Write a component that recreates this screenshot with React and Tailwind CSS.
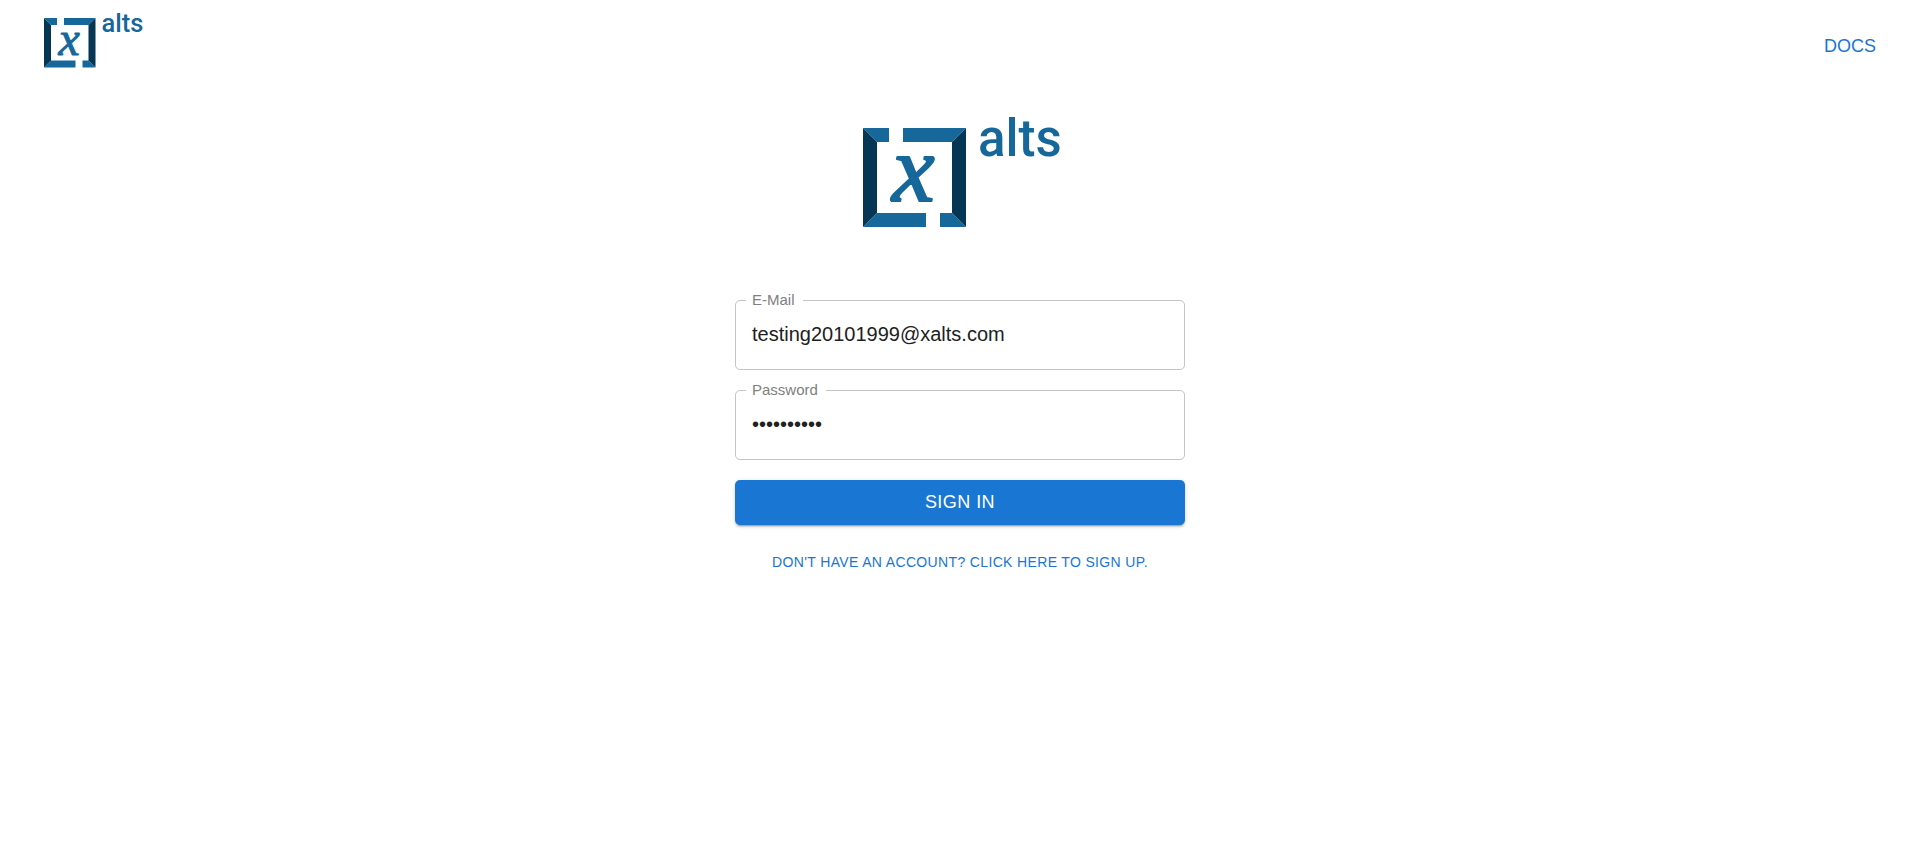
import { useState } from "react";

function Logo({ className }) {
  return (
    <svg viewBox="0 0 194 112" className={className} role="img" aria-label="xalts">
      <g fill="#16679a">
        <path d="M0 12H26V26H14Z" />
        <path d="M40 12H103L89 26H40Z" />
        <path d="M14 97H63V111H0Z" />
        <path d="M77 97H89L103 111H77Z" />
      </g>
      <g fill="#053755">
        <path d="M0 12L14 26V97L0 111Z" />
        <path d="M103 12L89 26V97L103 111Z" />
      </g>
      <text
        x="29"
        y="85"
        fill="#16679a"
        stroke="#16679a"
        strokeWidth="2"
        strokeLinejoin="round"
        fontSize="96"
        fontStyle="italic"
        fontFamily="'Liberation Serif', serif"
      >
        x
      </text>
      <text x="115" y="40" fill="#16679a" fontSize="51" fontWeight="500" fontFamily="Roboto, sans-serif">
        alts
      </text>
    </svg>
  );
}

function Field({ id, label, type, value, onChange, autoComplete }) {
  return (
    <div className="relative">
      <label
        htmlFor={id}
        className="absolute -top-2.5 left-[11px] bg-white pr-2 pl-1.5 text-[15px] leading-5 text-[#808080]"
      >
        {label}
      </label>
      <input
        id={id}
        type={type}
        value={value}
        autoComplete={autoComplete}
        onChange={(event) => onChange(event.target.value)}
        className="block h-[70px] w-full rounded-[5px] border border-[#c4c4c4] bg-transparent px-4 pb-0.5 text-xl text-[#212121] outline-none focus:border-[#1976d2]"
      />
    </div>
  );
}

export default function App() {
  const [email, setEmail] = useState("testing20101999@xalts.com");
  const [password, setPassword] = useState("abcdefghij");

  return (
    <div className="min-h-screen bg-white font-['Liberation_Sans',Arial,sans-serif]">
      <header className="flex items-start justify-between px-11 pt-3">
        <a href="#home">
          <Logo className="block h-14 w-[97px] overflow-visible" />
        </a>
        <a href="#docs" className="pt-5 text-lg leading-7 text-[#1976d2]">
          DOCS
        </a>
      </header>

      <main className="mx-auto flex w-full max-w-[450px] flex-col items-center pt-12">
        <Logo className="block h-28 w-[194px] overflow-visible" />
        <form className="mt-18 flex w-full flex-col gap-5" onSubmit={(event) => event.preventDefault()}>
          <Field id="email" label="E-Mail" type="email" value={email} onChange={setEmail} autoComplete="username" />
          <Field
            id="password"
            label="Password"
            type="password"
            value={password}
            onChange={setPassword}
            autoComplete="current-password"
          />
          <button
            type="submit"
            className="h-[45px] w-full cursor-pointer rounded-[5px] bg-[#1976d2] pb-0.5 text-lg tracking-wide text-white shadow-[0_3px_1px_-2px_rgba(0,0,0,0.2),0_2px_2px_0_rgba(0,0,0,0.14),0_1px_5px_0_rgba(0,0,0,0.12)]"
          >
            SIGN IN
          </button>
        </form>
        <a href="#signup" className="mt-[27px] text-sm tracking-wide text-[#1976d2]">
          DON'T HAVE AN ACCOUNT? CLICK HERE TO SIGN UP.
        </a>
      </main>
    </div>
  );
}
